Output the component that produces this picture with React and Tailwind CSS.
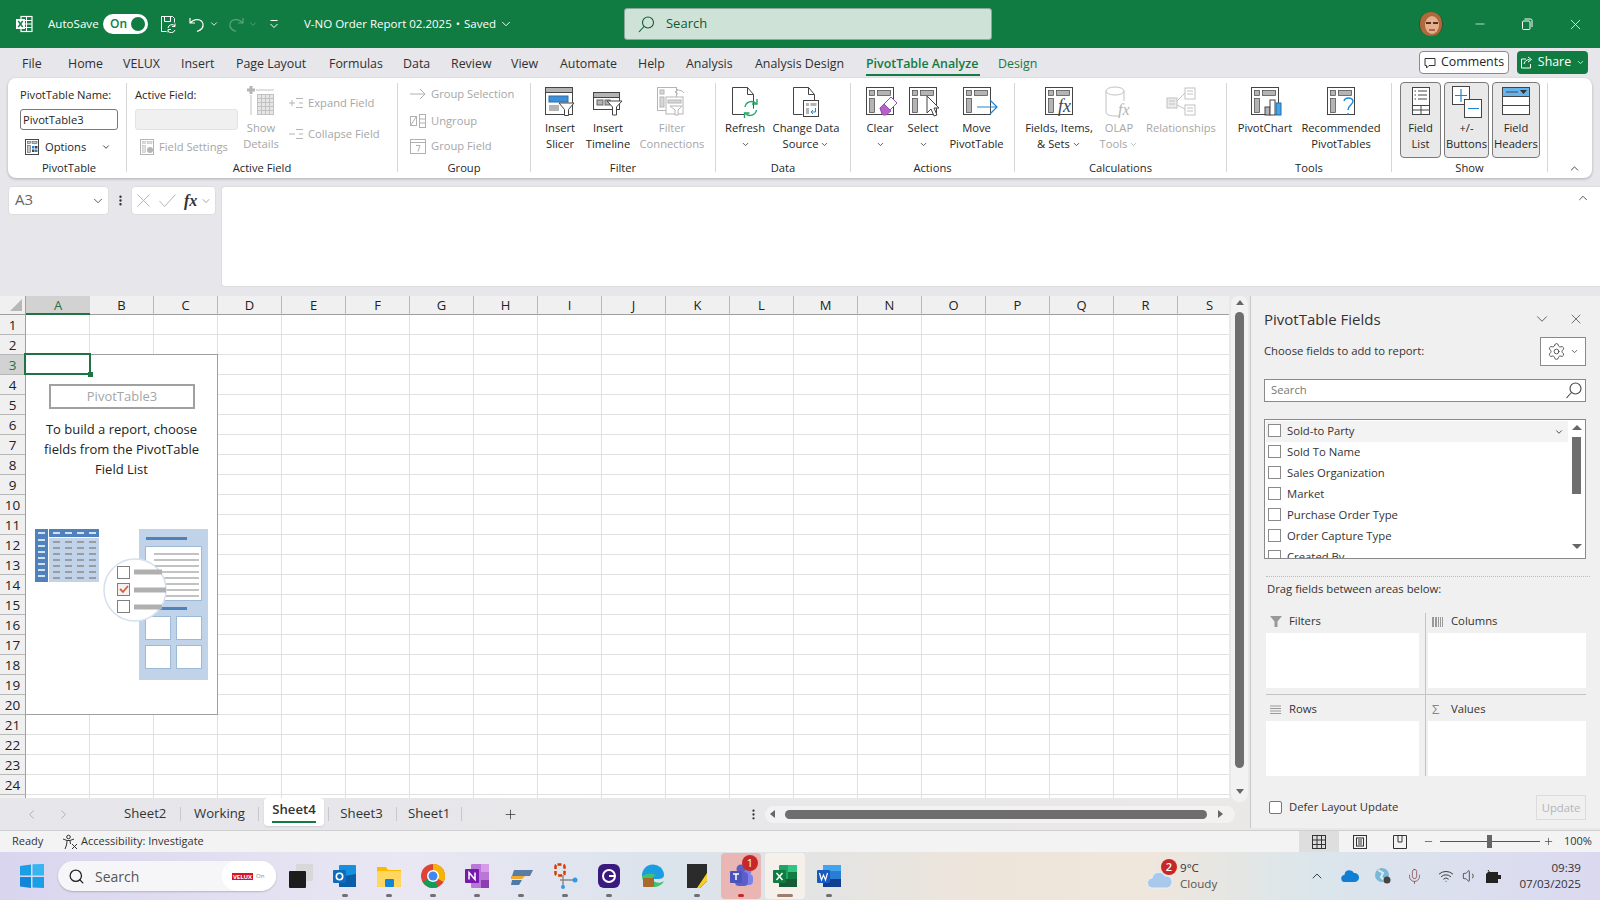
import { ChevronDown, ChevronUp, ChevronLeft, ChevronRight, X, Minus, Plus, Search, Settings, Wifi, Volume1, Mic, MoreVertical } from "lucide-react"

const columns = "ABCDEFGHIJKLMNOPQRS".split("")
const rows = Array.from({ length: 25 }, (_, i) => i + 1)

const tabs = [
  ["File", "w-[46px]"], ["Home", "w-[55px]"], ["VELUX", "w-[58px]"], ["Insert", "w-[55px]"], ["Page Layout", "w-[93px]"],
  ["Formulas", "w-[74px]"], ["Data", "w-[48px]"], ["Review", "w-[60px]"], ["View", "w-[49px]"], ["Automate", "w-[78px]"],
  ["Help", "w-[48px]"], ["Analysis", "w-[69px]"], ["Analysis Design", "w-[111px]"],
]

const fields = ["Sold-to Party", "Sold To Name", "Sales Organization", "Market", "Purchase Order Type", "Order Capture Type", "Created By"]

const XlLogo = ({ size = 18 }) => (
  <svg width={size} height={size} viewBox="0 0 18 18">
    <rect x="6" y="1.5" width="11" height="15" fill="none" stroke="currentColor" strokeWidth="1.2" />
    <path d="M6 5.5h11M6 9h11M6 12.5h11M11.5 1.5v15" stroke="currentColor" strokeWidth="1" />
    <rect x="1" y="4" width="9" height="10" fill="currentColor" />
    <path d="M3.3 6l4.4 6M7.7 6l-4.4 6" stroke="#107c41" strokeWidth="1.4" />
  </svg>
)

// the sheet-with-panes drawing that most PivotTable ribbon buttons share
const PaneBase = ({ children, faded }) => {
  const line = faded ? "#b5b5b5" : "#444444"
  const fill = faded ? "#dcdcdc" : "#b4b4b4"
  return (
    <svg width="28" height="30" viewBox="0 0 28 30" className="overflow-visible">
      <rect x="0.5" y="1.5" width="27" height="27" fill="#fff" stroke={line} />
      <rect x="3.5" y="4.5" width="5" height="5" fill={fill} stroke={line} strokeWidth="0.7" />
      <rect x="11.5" y="4.5" width="13" height="5" fill={fill} stroke={line} strokeWidth="0.7" />
      <rect x="3.5" y="12.5" width="5" height="14" fill={fill} stroke={line} strokeWidth="0.7" />
      {children}
    </svg>
  )
}

const SlicerIcon = () => (
  <svg width="32" height="30" viewBox="0 0 32 30">
    <rect x="1.5" y="1.5" width="27" height="27" fill="#fff" stroke="#444" />
    <rect x="1.5" y="1.5" width="27" height="5" fill="#b4b4b4" stroke="#444" />
    <rect x="5" y="10" width="19" height="6" fill="#3f8fd6" stroke="#2b6fae" />
    <rect x="5" y="19" width="10" height="6" fill="#b4b4b4" />
    <path d="M15 17h15l-5.5 6.5v6h-4v-6z" fill="#fff" stroke="#444" />
  </svg>
)

const TimelineIcon = () => (
  <svg width="32" height="30" viewBox="0 0 32 30">
    <rect x="1.5" y="6.5" width="26" height="17" fill="#fff" stroke="#444" />
    <rect x="1.5" y="6.5" width="26" height="5" fill="#b4b4b4" stroke="#444" />
    <rect x="5" y="14" width="6" height="5" fill="#b4b4b4" stroke="#666" />
    <rect x="13" y="14" width="5" height="5" fill="#b4b4b4" stroke="#666" />
    <path d="M15 15h15l-5.5 6v8h-4v-8z" fill="#fff" stroke="#444" />
  </svg>
)

const ConnectionsIcon = () => (
  <svg width="32" height="30" viewBox="0 0 32 30" stroke="#b5b5b5" fill="none">
    <rect x="1.5" y="1.5" width="19" height="23" fill="#fff" />
    <rect x="4" y="4" width="4" height="4" fill="#d8d8d8" />
    <rect x="4" y="11" width="4" height="10" fill="#d8d8d8" />
    <rect x="10" y="11" width="17" height="17" fill="#fff" />
    <rect x="12" y="14" width="13" height="3" fill="#d8d8d8" />
    <path d="M14 20h12l-4 4v5h-3v-5z" fill="#fff" />
    <path d="M19 6c3-3 7-2 9 1M19 6l3-3M19 6l3 2" />
  </svg>
)

const RefreshIcon = () => (
  <svg width="34" height="32" viewBox="0 0 34 32" fill="none">
    <path d="M4.5 1.5h15l6 7v14M4.5 1.5v27h12M19.5 1.5v7h6" stroke="#444" fill="#fff" />
    <path d="M17 21a6.5 6.5 0 0 1 11-3.5M28.5 24a6.5 6.5 0 0 1-11 3.5" stroke="#21a366" strokeWidth="1.4" />
    <path d="M29 13v5h-5M16.5 32v-5h5" stroke="#21a366" strokeWidth="1.4" />
  </svg>
)

const ChangeSourceIcon = () => (
  <svg width="34" height="32" viewBox="0 0 34 32" fill="none">
    <path d="M4.5 1.5h15l6 7v8M4.5 1.5v27h9M19.5 1.5v7h6" stroke="#444" fill="#fff" />
    <rect x="14.5" y="14.5" width="15" height="16" fill="#fff" stroke="#444" />
    <rect x="17" y="17" width="3" height="3" fill="#b4b4b4" />
    <rect x="21.5" y="17" width="6" height="3" fill="#b4b4b4" />
    <rect x="17" y="22" width="3" height="6" fill="#b4b4b4" />
    <path d="M26.5 22v4h-4M24 24l-2 2 2 2" stroke="#1c86d6" />
  </svg>
)

const ShowDetailsIcon = () => (
  <svg width="30" height="32" viewBox="0 0 30 32" fill="none" stroke="#c2c2c2">
    <path d="M5 0v8M1 4h8" stroke="#b5b5b5" strokeWidth="3" />
    <path d="M10 4h18M5 9v20" />
    <rect x="11.5" y="8.5" width="16" height="20" fill="#e6e6e6" />
    <path d="M11.5 12.5h16M11.5 16.5h16M11.5 20.5h16M11.5 24.5h16M15.5 8.5v20M19.5 8.5v20M23.5 8.5v20" />
  </svg>
)

const SmallPivot = ({ faded }) => {
  const line = faded ? "#b5b5b5" : "#444"
  const fill = faded ? "#e0e0e0" : "#c4c4c4"
  return (
    <svg width="16" height="16" viewBox="0 0 16 16">
      <rect x="1.5" y="0.5" width="13" height="15" fill="#fff" stroke={line} />
      <rect x="3.5" y="2.5" width="3" height="2" fill={fill} stroke={line} strokeWidth="0.5" />
      <rect x="8" y="2.5" width="5" height="2" fill={fill} stroke={line} strokeWidth="0.5" />
      <rect x="3.5" y="6.5" width="3" height="7" fill={fill} stroke={line} strokeWidth="0.5" />
      {faded ? <circle cx="11" cy="11" r="3" fill="#b5b5b5" /> : (
        <>
          <rect x="8" y="7" width="2.5" height="2.5" fill="#1c86d6" />
          <rect x="11" y="7" width="2.5" height="2.5" fill="#444" />
          <rect x="8" y="10.5" width="2.5" height="2.5" fill="#444" />
          <rect x="11" y="10.5" width="2.5" height="2.5" fill="#1c86d6" />
        </>
      )}
    </svg>
  )
}

const ExpandIcon = ({ plus }) => (
  <svg width="16" height="12" viewBox="0 0 16 12" stroke="#b5b5b5" fill="none">
    <path d={plus ? "M1 6h6M4 3v6" : "M1 6h6"} />
    <path d="M8 1.5h7M11 6h4M8 10.5h7" />
  </svg>
)

const BigButton = ({ className, icon, lines, faded, chevron }) => (
  <div className={`flex flex-col items-center shrink-0 pt-[3px] ${className}`}>
    <div className="h-[34px] flex items-start justify-center">{icon}</div>
    {lines.map((line, i) => (
      <div key={i} className={`h-4 leading-4 whitespace-nowrap flex items-center gap-[2px] ${faded ? "text-[#a6a6a6]" : "text-[#262626]"}`}>
        {line}
        {chevron && i === lines.length - 1 ? <ChevronDown size={9} strokeWidth={2} /> : null}
      </div>
    ))}
  </div>
)

const Group = ({ className, label, labelClass = "", children }) => (
  <>
    <div className={`shrink-0 ${className}`}>
      <div className="h-[77px] flex">{children}</div>
      <div className={`h-4 leading-4 text-center text-[#262626] ${labelClass}`}>{label}</div>
    </div>
    <div className="w-px h-[89px] bg-[#d6d6d6] shrink-0" />
  </>
)

const ToggleBox = ({ className, icon, lines }) => (
  <div className={`h-[76px] -mt-px rounded-[4px] border border-[#7a7a7a] bg-[#e9e9e9] flex flex-col items-center pt-[3px] shrink-0 ${className}`}>
    <div className="h-[34px]">{icon}</div>
    {lines.map((line) => (
      <div key={line} className="h-4 leading-4 whitespace-nowrap text-[#262626]">{line}</div>
    ))}
  </div>
)

const Ribbon = () => (
  <div className="mx-2 h-[100px] rounded-lg bg-white shadow-[0_1px_3px_rgba(0,0,0,0.25)] flex items-start pt-[5px] text-[11.2px] relative">
    <Group className="w-[118px]" label="PivotTable" labelClass="pl-1">
      <div className="pl-3 pt-[4px]">
        <div className="h-4 leading-4 text-[#262626]">PivotTable Name:</div>
        <div className="mt-[6px] w-[98px] h-[21px] rounded-[3px] border border-[#7a7a7a] pl-[2px] leading-[19px] text-[#262626]">PivotTable3</div>
        <div className="mt-[9px] pl-1 flex items-center gap-[5px] text-[#262626]">
          <SmallPivot />
          <span>Options</span>
          <ChevronDown size={10} strokeWidth={2} className="ml-[10px]" />
        </div>
      </div>
    </Group>
    <Group className="w-[270px]" label="Active Field">
      <div className="pl-2 pt-[4px] w-[114px]">
        <div className="h-4 leading-4 text-[#262626]">Active Field:</div>
        <div className="mt-[6px] w-[103px] h-[21px] rounded-[3px] border border-[#e3e3e3] bg-[#f0f0f0]" />
        <div className="mt-[9px] pl-1 flex items-center gap-1 text-[#a6a6a6] whitespace-nowrap">
          <SmallPivot faded />
          <span>Field Settings</span>
        </div>
      </div>
      <BigButton className="w-[40px]" icon={<ShowDetailsIcon />} lines={["Show", "Details"]} faded />
      <div className="pl-[7px] text-[#a6a6a6] whitespace-nowrap">
        <div className="mt-[12px] h-4 flex items-center gap-1"><ExpandIcon plus />Expand Field</div>
        <div className="mt-[15px] h-4 flex items-center gap-1"><ExpandIcon />Collapse Field</div>
      </div>
    </Group>
    <Group className="w-[132px]" label="Group">
      <div className="pl-3 text-[#a6a6a6] whitespace-nowrap">
        <div className="mt-[3px] h-4 flex items-center gap-[5px]">
          <svg width="16" height="12" viewBox="0 0 16 12" stroke="#b0b0b0" fill="none"><path d="M0 6h15M10 1l5 5-5 5" /></svg>
          Group Selection
        </div>
        <div className="mt-[11px] h-4 flex items-center gap-[5px]">
          <svg width="16" height="16" viewBox="0 0 16 16" stroke="#b0b0b0" fill="none"><rect x="0.5" y="3.5" width="6" height="9" /><rect x="9.5" y="1.5" width="6" height="13" /><path d="M9.5 6h6M9.5 10h6M1 12l5-8" /></svg>
          Ungroup
        </div>
        <div className="mt-[9px] h-4 flex items-center gap-[5px]">
          <svg width="16" height="16" viewBox="0 0 16 16" stroke="#b0b0b0" fill="none"><rect x="0.5" y="1.5" width="15" height="14" /><path d="M0.5 4.5h15M6 7.5h4l-2 6" /></svg>
          Group Field
        </div>
      </div>
    </Group>
    <Group className="w-[184px]" label="Filter">
      <BigButton className="w-12 ml-[5px]" icon={<SlicerIcon />} lines={["Insert", "Slicer"]} />
      <BigButton className="w-12" icon={<TimelineIcon />} lines={["Insert", "Timeline"]} />
      <BigButton className="w-[72px] ml-1" icon={<ConnectionsIcon />} lines={["Filter", "Connections"]} faded />
    </Group>
    <Group className="w-[134px]" label="Data">
      <BigButton className="w-10 ml-[9px]" icon={<RefreshIcon />} lines={["Refresh", <ChevronDown key="c" size={9} strokeWidth={2} />]} />
      <BigButton className="w-[76px] ml-[3px]" icon={<ChangeSourceIcon />} lines={["Change Data", "Source"]} chevron />
    </Group>
    <Group className="w-[163px]" label="Actions">
      <BigButton className="w-10 ml-[9px]" lines={["Clear", <ChevronDown key="c" size={9} strokeWidth={2} />]} icon={
        <PaneBase>
          <path d="M14 22l11-11 6 6-11 11h-4z" fill="#fff" stroke="#9a4fb0" />
          <path d="M14 22l4-4 7 7-5 4h-3z" fill="#b660c9" stroke="#9a4fb0" />
        </PaneBase>
      } />
      <BigButton className="w-10 ml-[3px]" lines={["Select", <ChevronDown key="c" size={9} strokeWidth={2} />]} icon={
        <PaneBase><path d="M18 10v17l4-4 3 7 3-1-3-7h5z" fill="#fff" stroke="#444" /></PaneBase>
      } />
      <BigButton className="w-[63px] ml-[2px]" lines={["Move", "PivotTable"]} icon={
        <PaneBase><path d="M14 21h20M27 14l7 7-7 7" fill="none" stroke="#1c86d6" strokeWidth="1.2" /></PaneBase>
      } />
    </Group>
    <Group className="w-[211px]" label="Calculations">
      <BigButton className="w-[76px] ml-[6px]" lines={["Fields, Items,", "& Sets"]} chevron icon={
        <PaneBase><text x="13" y="26" fontFamily="Liberation Serif, serif" fontStyle="italic" fontSize="18" fill="#444">fx</text></PaneBase>
      } />
      <BigButton className="w-11" lines={["OLAP", "Tools"]} faded chevron icon={
        <svg width="30" height="32" viewBox="0 0 30 32" fill="none" stroke="#c2c2c2">
          <ellipse cx="11" cy="5" rx="9" ry="4" />
          <path d="M2 5v21c0 3 5 4 9 4h4M20 5v10" />
          <text x="14" y="29" fontFamily="Liberation Serif, serif" fontStyle="italic" fontSize="16" fill="#b5b5b5" stroke="none">fx</text>
        </svg>
      } />
      <BigButton className="w-[76px] ml-[2px]" lines={["Relationships"]} faded icon={
        <svg width="30" height="30" viewBox="0 0 30 30" fill="none" stroke="#c2c2c2">
          <rect x="1" y="12" width="10" height="10" fill="#ebebeb" />
          <rect x="19" y="2" width="10" height="11" fill="#fff" />
          <rect x="19" y="19" width="10" height="10" fill="#fff" />
          <path d="M11 15l8-8M11 19l8 4M21 5h6M21 8h6M21 22h6M21 25h6M3 15h6M3 18h6" />
        </svg>
      } />
    </Group>
    <Group className="w-[164px]" label="Tools">
      <BigButton className="w-16 ml-[6px]" lines={["PivotChart"]} icon={
        <PaneBase>
          <rect x="14" y="21" width="5" height="8" fill="#b4b4b4" stroke="#444" />
          <rect x="19" y="14" width="5" height="15" fill="#fff" stroke="#444" />
          <rect x="25" y="17" width="5" height="12" fill="#4aa3df" stroke="#1c6fb0" />
        </PaneBase>
      } />
      <BigButton className="w-[84px] ml-[2px]" lines={["Recommended", "PivotTables"]} icon={
        <PaneBase><path d="M17 15c1-4 8-4 9 0 0 4-5 4-5 9M21 27v2" fill="none" stroke="#1c86d6" strokeWidth="1.4" /></PaneBase>
      } />
    </Group>
    <Group className="w-[155px]" label="Show">
      <ToggleBox className="w-[41px] ml-2" lines={["Field", "List"]} icon={
        <svg width="20" height="30" viewBox="0 0 20 30" fill="#fff" stroke="#444">
          <rect x="1.5" y="1.5" width="17" height="27" />
          <path d="M1.5 19.5h17M1.5 24h17M10 19.5v9M7 5h9M7 9h9M7 13h9M3.5 5h1.5M3.5 9h1.5M3.5 13h1.5" />
        </svg>
      } />
      <ToggleBox className="w-[45px] ml-[3px]" lines={["+/-", "Buttons"]} icon={
        <svg width="32" height="32" viewBox="0 0 32 32" fill="none">
          <rect x="1.5" y="0.5" width="17" height="18" fill="#fff" stroke="#444" />
          <rect x="13.5" y="13.5" width="17" height="18" fill="#fff" stroke="#444" />
          <path d="M4 9.5h12M10 3v13M17 22.5h11" stroke="#1c86d6" strokeWidth="1.2" />
        </svg>
      } />
      <ToggleBox className="w-12 ml-[3px]" lines={["Field", "Headers"]} icon={
        <svg width="30" height="30" viewBox="0 0 30 30" fill="#fff" stroke="#444">
          <rect x="1.5" y="1.5" width="27" height="27" />
          <rect x="1.5" y="1.5" width="27" height="9" fill="#67b4ec" stroke="#444" />
          <path d="M1.5 19.5h27M5 6h12" />
          <path d="M19 4h7l-3.5 4z" fill="#333" stroke="none" />
        </svg>
      } />
    </Group>
    <ChevronUp size={13} strokeWidth={1.6} className="absolute right-[11px] bottom-[3px] text-[#333]" />
  </div>
)

const TitleBar = () => (
  <div className="h-12 bg-[#107c41] flex items-center text-white text-[11.6px] shrink-0">
    <div className="ml-[15px] w-[33px]"><XlLogo /></div>
    <span className="w-[55px]">AutoSave</span>
    <div className="w-[45px] h-5 rounded-full bg-white flex items-center justify-between pl-[7px] pr-[3px] text-[#107c41] font-semibold text-[12px]">
      On
      <div className="w-[14px] h-[14px] rounded-full bg-[#107c41]" />
    </div>
    <svg width="18" height="18" viewBox="0 0 18 18" fill="none" stroke="#fff" className="ml-[11px]">
      <path d="M2.5 1.5h11l2 2v4M2.5 1.5v15h5M5.5 1.5v5h6v-5" />
      <path d="M9 13a4 4 0 0 1 7-2M16 15a4 4 0 0 1-7 1M16 8.500v3h-3M9 17.500v-3h3" />
    </svg>
    <svg width="18" height="18" viewBox="0 0 18 18" fill="none" stroke="#fff" strokeWidth="1.2" className="ml-[11px]">
      <path d="M2 3v5h5M2.500 8C6 3 14 3.500 15 9c.6 3.500-2 6-6 7.500" />
    </svg>
    <ChevronDown size={10} strokeWidth={2} className="ml-[3px]" />
    <svg width="18" height="18" viewBox="0 0 18 18" fill="none" stroke="#5aa47f" strokeWidth="1.2" className="ml-[8px]">
      <path d="M16 3v5h-5M15.500 8C12 3 4 3.500 3 9c-.6 3.500 2 6 6 7.500" />
    </svg>
    <ChevronDown size={10} strokeWidth={2} className="ml-[3px] text-[#5aa47f]" />
    <svg width="10" height="10" viewBox="0 0 10 10" stroke="#fff" fill="none" className="ml-[11px]"><path d="M1.500 1.500h7M1.500 5l3.500 3.500L8.500 5" /></svg>
    <span className="ml-[25px] whitespace-nowrap text-[11.5px]">V-NO Order Report 02.2025 <span className="mx-[1px]">•</span> Saved</span>
    <ChevronDown size={14} strokeWidth={1.6} className="ml-[3px]" />
    <div className="ml-[111px] w-[368px] h-8 rounded-[3px] border border-[#8aa89a] bg-[#cfe2d8] flex items-center pl-[13px] text-[#0d5a30] text-[13px]">
      <svg width="17" height="17" viewBox="0 0 17 17" fill="none" stroke="#0f5a33" className="mr-[11px]" strokeWidth="1.1">
        <circle cx="10" cy="6.500" r="5.500" /><path d="M6 10.500l-5 5.500" />
      </svg>
      Search
    </div>
    <div className="flex-1" />
    <svg width="24" height="24" viewBox="0 0 24 24" className="mr-[30px]">
      <clipPath id="avatarClip"><circle cx="12" cy="12" r="12" /></clipPath>
      <g clipPath="url(#avatarClip)">
        <rect width="24" height="24" fill="#3a4a3c" />
        <ellipse cx="12" cy="12" rx="11" ry="13" fill="#b06a3a" />
        <ellipse cx="13" cy="13" rx="7" ry="9" fill="#e2b08f" />
        <path d="M7 11h5M14 11h5" stroke="#5a2d1d" strokeWidth="2" />
        <path d="M10 18h6" stroke="#a8443a" strokeWidth="1.5" />
      </g>
    </svg>
    <Minus size={14} strokeWidth={1.2} className="mr-[34px]" />
    <svg width="12" height="12" viewBox="0 0 12 12" fill="none" stroke="#fff" className="mr-[34px]"><rect x="1.500" y="3" width="7.500" height="8.500" rx="1" /><path d="M3.500 1h6a1.500 1.500 0 0 1 1.500 1.500V9" /></svg>
    <X size={17} strokeWidth={1.1} className="mr-[16px]" />
  </div>
)

const TabRow = () => (
  <div className="h-[30px] flex items-center text-[12.4px] text-[#303030] shrink-0 pl-[22px]">
    {tabs.map(([label, width]) => (
      <span key={label} className={`${width} whitespace-nowrap shrink-0 pt-[2px]`}>{label}</span>
    ))}
    <span className="w-[132px] shrink-0 relative font-semibold text-[#107c41] whitespace-nowrap leading-[30px] pt-[1px]">
      PivotTable Analyze
      <span className="absolute left-0 top-[26px] w-[114px] h-[2px] bg-[#107c41]" />
    </span>
    <span className="w-[60px] text-[#107c41] pt-[2px]">Design</span>
    <div className="ml-auto flex gap-2 mr-3 -mt-[1px]">
      <div className="w-[90px] h-[23px] rounded-[4px] border border-[#8a8a8a] bg-white flex items-center justify-center gap-[5px] text-[#262626]">
        <svg width="12" height="12" viewBox="0 0 12 12" fill="none" stroke="#333"><path d="M1 1.500h10v7H5l-2.500 2.500v-2.500H1z" /></svg>
        Comments
      </div>
      <div className="w-[71px] h-[23px] rounded-[4px] bg-[#107c41] text-white flex items-center justify-center gap-[5px]">
        <svg width="13" height="13" viewBox="0 0 13 13" fill="none" stroke="#fff"><path d="M6 3H1.500v9h9V8M4 8c.5-3 3-4.500 5.500-4.500M8 1l3.500 2.500L8 6" /></svg>
        Share
        <ChevronDown size={9} strokeWidth={2} />
      </div>
    </div>
  </div>
)

const FormulaBar = () => (
  <div className="mt-2 h-[101px] flex items-start text-[#444] shrink-0">
    <div className="ml-2 w-[101px] h-[29px] rounded-[4px] border border-[#dddddd] bg-white flex items-center justify-between pl-[6px] pr-[3px] text-[15px] text-[#666]">
      <span className="pb-[3px]">A3</span>
      <ChevronDown size={14} strokeWidth={1.4} className="text-[#333]" />
    </div>
    <MoreVertical size={13} strokeWidth={2.4} className="ml-[5px] mt-2 text-[#333]" />
    <div className="ml-1 w-[85px] h-[29px] rounded-[4px] border border-[#dddddd] bg-white flex items-center pl-[5px]">
      <svg width="13" height="13" viewBox="0 0 13 13" stroke="#b5b5b5" fill="none"><path d="M0.500 0.500l12 12M12.500 0.500l-12 12" /></svg>
      <svg width="17" height="13" viewBox="0 0 17 13" stroke="#b5b5b5" fill="none" className="ml-[9px]"><path d="M0.500 7l5 5.500L16.500 0.500" /></svg>
      <span className="ml-[8px] font-['Liberation_Serif',serif] italic font-bold text-[16px] text-[#333]">fx</span>
      <ChevronDown size={12} strokeWidth={1.2} className="ml-[3px] text-[#666]" />
    </div>
    <div className="ml-[5px] flex-1 h-[101px] rounded-l-[4px] border border-r-0 border-[#dddddd] bg-white flex justify-end pr-[10px] pt-[4px]">
      <ChevronUp size={14} strokeWidth={1.4} className="text-[#333]" />
    </div>
  </div>
)

const PivotPicture = () => (
  <svg width="176" height="152" viewBox="0 0 176 152" className="block">
    {/* left table */}
    <rect x="0" y="0" width="13" height="53" fill="#4f81bd" />
    <rect x="14" y="0" width="50" height="8" fill="#4f81bd" />
    <rect x="14" y="9" width="50" height="44" fill="#c0d3e8" />
    <path d="M3 4h7M18 4h7M30 4h7M42 4h7M54 4h7" stroke="#fff" strokeWidth="1.500" />
    <path d="M3 11h7M3 17h7M3 23h7M3 29h7M3 35h7M3 41h7M3 47h7" stroke="#fff" strokeWidth="1.500" />
    <path d="M18 13h7M30 13h7M42 13h7M54 13h7M18 19h7M30 19h7M42 19h7M54 19h7M18 25h7M30 25h7M42 25h7M54 25h7M18 31h7M30 31h7M42 31h7M54 31h7M18 37h7M30 37h7M42 37h7M54 37h7M18 43h7M30 43h7M42 43h7M54 43h7M18 49h7M30 49h7M42 49h7M54 49h7" stroke="#8c8c8c" strokeWidth="1.500" />
    {/* right panel */}
    <rect x="104" y="0" width="69" height="151" fill="#c0d3e8" />
    <rect x="111" y="8" width="41" height="3" fill="#4f81bd" />
    <rect x="110.500" y="17.500" width="56" height="54" fill="#fff" stroke="#9db9d8" />
    <path d="M119 25h45M119 31h45M119 37h45M119 43h45M119 49h45M119 55h45M119 61h45M119 67h45" stroke="#aeaeae" strokeWidth="1.600" />
    <rect x="111" y="78" width="41" height="3" fill="#4f81bd" />
    <rect x="110.500" y="87.500" width="25" height="23" fill="#fff" stroke="#9db9d8" />
    <rect x="141.500" y="87.500" width="25" height="23" fill="#fff" stroke="#9db9d8" />
    <rect x="110.500" y="116.500" width="25" height="23" fill="#fff" stroke="#9db9d8" />
    <rect x="141.500" y="116.500" width="25" height="23" fill="#fff" stroke="#9db9d8" />
    {/* lens */}
    <circle cx="100" cy="61" r="31" fill="#fff" stroke="#d4e0ee" strokeWidth="1.500" />
    <rect x="82.500" y="37.500" width="12" height="12" fill="#fff" stroke="#7f7f7f" />
    <rect x="82.500" y="54.500" width="12" height="12" fill="#f2f2f2" stroke="#7f7f7f" />
    <rect x="82.500" y="71.500" width="12" height="12" fill="#fff" stroke="#7f7f7f" />
    <path d="M85 60l3 3 5-6" fill="none" stroke="#d8613c" strokeWidth="1.800" />
    <path d="M99 43h28M99 61h32M99 78h28" stroke="#b0b0b0" strokeWidth="5" />
  </svg>
)

const Grid = () => (
  <div className="w-[1229px] h-[502px] overflow-hidden relative bg-white">
    <div className="flex h-[19px] w-[1242px] bg-[#f0f0f0] text-[13px] text-[#222]">
      <div className="w-[26px] shrink-0 border-r border-b border-[#9f9f9f] relative overflow-hidden">
        <div className="absolute right-[3px] bottom-[3px] w-0 h-0 border-l-[12px] border-l-transparent border-b-[12px] border-b-[#b8b8b8]" />
      </div>
      {columns.map((c) => (
        <div key={c} className={`w-16 shrink-0 text-center leading-[18px] ${c === "A" ? "bg-[#d2d2d2] text-[#217346] border-b-2 border-[#217346]" : "border-r border-b border-[#b8b8b8] border-b-[#9f9f9f]"}`}>{c}</div>
      ))}
    </div>
    {rows.map((r) => (
      <div key={r} className="flex h-5 w-[1242px]">
        <div className={`w-[26px] shrink-0 text-center text-[13.5px] leading-[20px] border-r border-b border-r-[#9f9f9f] border-b-[#b8b8b8] ${r === 3 ? "bg-[#d2d2d2] text-[#217346]" : "bg-[#f0f0f0] text-[#222]"}`}>{r < 25 ? r : ""}</div>
        {columns.map((c) => (
          <div key={c} className="w-16 shrink-0 border-r border-b border-[#e1e1e1]" />
        ))}
      </div>
    ))}
    {/* empty PivotTable placeholder sits on top of the cells */}
    <div className="absolute left-[25px] top-[58px] w-[193px] h-[361px] bg-white border border-[#9f9f9f]">
      <div className="ml-[23px] mt-[29px] w-[146px] h-[25px] border-2 border-[#a0a0a0] text-center text-[13px] leading-[21px] text-[#a6a6a6]">PivotTable3</div>
      <div className="mt-[10px] text-center text-[13px] leading-5 text-[#222]">
        To build a report, choose<br />fields from the PivotTable<br />Field List
      </div>
      <div className="ml-[9px] mt-[50px]"><PivotPicture /></div>
    </div>
    <div className="absolute left-[24px] top-[57px] w-[67px] h-[22px] border-2 border-[#217346]">
      <div className="absolute -right-[4px] -bottom-[4px] w-[5px] h-[5px] bg-[#217346]" />
    </div>
  </div>
)

const VScroll = () => (
  <div className="w-[21px] h-[502px] pl-[2px]">
    <div className="w-[17px] h-[506px] rounded-[8px] bg-[#f2f2f2] flex flex-col items-center pt-[4px]">
      <div className="w-0 h-0 border-l-[4px] border-r-[4px] border-b-[5px] border-l-transparent border-r-transparent border-b-[#666]" />
      <div className="mt-[7px] w-[9px] h-[456px] rounded-full bg-[#6e6e6e]" />
      <div className="mt-[21px] w-0 h-0 border-l-[4px] border-r-[4px] border-t-[5px] border-l-transparent border-r-transparent border-t-[#666]" />
    </div>
  </div>
)

const SheetTabs = () => (
  <div className="h-8 flex items-center text-[13.2px] text-[#333] relative">
    <ChevronLeft size={15} strokeWidth={1.1} className="ml-6 text-[#999]" />
    <ChevronRight size={15} strokeWidth={1.1} className="ml-[17px] text-[#999]" />
    <span className="ml-[53px] w-[42px] text-center">Sheet2</span>
    <div className="ml-[14px] w-px h-[14px] bg-[#c8c8c8]" />
    <span className="ml-[12px] w-[53px] text-center">Working</span>
    <div className="ml-[12px] w-px h-[14px] bg-[#c8c8c8]" />
    <div className="ml-[5px] w-[60px] h-[28px] self-start rounded-[4px] bg-white text-center font-semibold leading-[22px] relative shadow-[0_1px_2px_rgba(0,0,0,0.1)]">
      Sheet4
      <div className="absolute left-2 right-2 top-[23px] h-[2px] bg-[#107c41]" />
    </div>
    <div className="ml-[4px] w-px h-[14px] bg-[#c8c8c8]" />
    <span className="ml-[11px] w-[43px] text-center">Sheet3</span>
    <div className="ml-[13px] w-px h-[14px] bg-[#c8c8c8]" />
    <span className="ml-[11px] w-[41px] text-center">Sheet1</span>
    <div className="ml-[12px] w-px h-[14px] bg-[#c8c8c8]" />
    <Plus size={15} strokeWidth={1.2} className="ml-[41px] text-[#333]" />
    <MoreVertical size={13} strokeWidth={2.2} className="ml-[229px] text-[#333]" />
    <div className="ml-[5px] w-[470px] h-[17px] rounded-full bg-[#f2f2f2] flex items-center pl-[5px]">
      <div className="w-0 h-0 border-t-[4px] border-b-[4px] border-r-[5px] border-t-transparent border-b-transparent border-r-[#666]" />
      <div className="ml-[10px] w-[422px] h-[9px] rounded-full bg-[#6e6e6e]" />
      <div className="ml-[11px] w-0 h-0 border-t-[4px] border-b-[4px] border-l-[5px] border-t-transparent border-b-transparent border-l-[#666]" />
    </div>
  </div>
)

const AreaLabel = ({ icon, children, className }) => (
  <div className={`flex items-center text-[#333] ${className}`}>
    <div className="w-[23px] pl-1 flex items-center">{icon}</div>
    {children}
  </div>
)

const FieldsPanel = () => (
  <div className="w-[350px] h-[532px] bg-[#f0f0f0] border-l border-[#c9c9c9] pl-[13px] pr-[14px] text-[11.3px] text-[#333]">
    <div className="mt-3 h-[22px] flex items-center justify-between">
      <span className="text-[15px] text-[#333]">PivotTable Fields</span>
      <div className="flex items-center gap-[17px] mr-[2px]">
        <ChevronDown size={18} strokeWidth={1} />
        <X size={16} strokeWidth={1} />
      </div>
    </div>
    <div className="mt-[7px] h-[29px] flex items-center justify-between">
      <span>Choose fields to add to report:</span>
      <div className="w-[46px] h-[29px] border border-[#8a8a8a] bg-white flex items-center justify-center gap-[4px]">
        <Settings size={19} strokeWidth={1} />
        <ChevronDown size={9} strokeWidth={2} />
      </div>
    </div>
    <div className="mt-[13px] h-[23px] border border-[#8a8a8a] bg-white flex items-center justify-between pl-[6px] pr-[3px] text-[#777]">
      Search
      <svg width="17" height="17" viewBox="0 0 17 17" fill="none" stroke="#444" strokeWidth="1.100"><circle cx="10.500" cy="6.500" r="5.500" /><path d="M6.500 10.500l-5 5.500" /></svg>
    </div>
    <div className="mt-[17px] h-[140px] border border-[#8a8a8a] bg-white flex overflow-hidden">
      <div className="flex-1 pl-px pt-px">
        {fields.map((field, i) => (
          <div key={field} className={`h-[21px] flex items-center pl-[2px] pr-1 ${i === 0 ? "bg-[#f3f3f3]" : ""}`}>
            <div className="w-[13px] h-[13px] border border-[#8a8a8a] bg-white mr-[6px] -mt-[2px]" />
            <span>{field}</span>
            {i === 0 ? <ChevronDown size={10} strokeWidth={2} className="ml-auto" /> : null}
          </div>
        ))}
      </div>
      <div className="w-[17px] flex flex-col items-center pt-[5px]">
        <div className="w-0 h-0 border-l-[5px] border-r-[5px] border-b-[5px] border-l-transparent border-r-transparent border-b-[#666]" />
        <div className="mt-[7px] w-[9px] h-[57px] bg-[#6e6e6e]" />
        <div className="mt-[50px] w-0 h-0 border-l-[5px] border-r-[5px] border-t-[5px] border-l-transparent border-r-transparent border-t-[#666]" />
      </div>
    </div>
    <div className="mt-[17px] -mr-1 ml-[2px] h-px border-t border-dotted border-[#bdbdbd]" />
    <div className="mt-1 ml-[3px] h-4 leading-4">Drag fields between areas below:</div>
    <div className="mt-4 ml-[2px] h-[82px] flex border-b border-[#c4c4c4]">
      <div className="w-40 h-[81px] border-r border-[#c4c4c4]">
        <AreaLabel className="h-5 pb-[3px]" icon={<svg width="12" height="11" viewBox="0 0 12 11" fill="#999"><path d="M0 0h12L7.500 5.500V11h-3V5.500z" /></svg>}>Filters</AreaLabel>
        <div className="w-[153px] h-[55px] bg-white" />
      </div>
      <div className="pl-[2px] flex-1">
        <AreaLabel className="h-5 pb-[3px]" icon={<svg width="11" height="10" viewBox="0 0 11 10" fill="#999"><path d="M0 0h2v10H0zM3 0h2v10H3zM6 0h1v10H6zM8 0h1v10H8zM10 0h1v10h-1z" /></svg>}>Columns</AreaLabel>
        <div className="h-[55px] bg-white" />
      </div>
    </div>
    <div className="ml-[2px] h-[81px] flex">
      <div className="w-40 border-r border-[#c4c4c4]">
        <AreaLabel className="h-[26px] pt-[2px]" icon={<svg width="11" height="9" viewBox="0 0 11 9" stroke="#999" fill="none"><path d="M0 1h11M0 3.500h11M0 6h11M0 8.500h11" /></svg>}>Rows</AreaLabel>
        <div className="w-[153px] h-[55px] bg-white" />
      </div>
      <div className="pl-[2px] flex-1">
        <AreaLabel className="h-[26px] pt-[2px]" icon={<span className="text-[#888] text-[13px] leading-none">Σ</span>}>Values</AreaLabel>
        <div className="h-[55px] bg-white" />
      </div>
    </div>
    <div className="mt-[19px] ml-[5px] flex items-center">
      <div className="w-[13px] h-[13px] rounded-[2px] border border-[#777] bg-white mr-[7px]" />
      Defer Layout Update
      <div className="ml-auto w-[50px] h-[25px] border border-[#dcdcdc] text-center leading-[23px] text-[#b5b5b5]">Update</div>
    </div>
  </div>
)

const StatusBar = () => (
  <div className="h-[22px] bg-[#f3f3f3] border-t border-[#cfcfcf] flex items-center text-[11px] text-[#333] shrink-0">
    <span className="ml-3 w-[50px]">Ready</span>
    <svg width="16" height="16" viewBox="0 0 16 16" fill="none" stroke="#333" className="mr-[3px]">
      <circle cx="6.500" cy="3" r="1.800" /><path d="M1 5l4 1.500h3L12 5M5 7l-.5 4L3 15M8 7l.5 3M10 10l5 5M15 10l-5 5" />
    </svg>
    <span>Accessibility: Investigate</span>
    <div className="ml-auto w-10 h-[21px] bg-[#dedede] flex items-center justify-center">
      <svg width="14" height="14" viewBox="0 0 14 14" fill="none" stroke="#333"><rect x="0.500" y="0.500" width="13" height="13" /><path d="M0.500 5h13M0.500 9.500h13M5 0.500v13M9.500 0.500v13" /></svg>
    </div>
    <div className="w-[41px] flex justify-center">
      <svg width="14" height="14" viewBox="0 0 14 14" fill="none" stroke="#333"><rect x="0.500" y="0.500" width="13" height="13" /><rect x="3.500" y="3" width="7" height="8" /><path d="M5 5h4M5 7h4M5 9h4" /></svg>
    </div>
    <div className="w-10 flex justify-center">
      <svg width="14" height="14" viewBox="0 0 14 14" fill="none" stroke="#333"><path d="M0.500 0.500h13v13H0.500zM5 0.500v6.500h4V0.500" /></svg>
    </div>
    <Minus size={11} strokeWidth={1.4} className="ml-[3px]" />
    <div className="ml-[6px] w-[100px] h-px bg-[#555] relative">
      <div className="absolute left-[47px] -top-[6px] w-[5px] h-[13px] bg-[#666]" />
    </div>
    <Plus size={11} strokeWidth={1.4} className="ml-[3px]" />
    <span className="ml-[10px] mr-2 w-[28px] text-[11px] text-[#333]">100%</span>
  </div>
)

const TaskSlot = ({ children, dot, className = "" }) => (
  <div className={`w-10 h-[46px] mx-[2px] rounded-[4px] flex flex-col items-center justify-center relative shrink-0 ${className}`}>
    {children}
    {dot ? <div className={`absolute bottom-[2px] w-[6px] h-[3px] rounded-full ${dot}`} /> : null}
  </div>
)

const Taskbar = () => (
  <div className="h-12 flex items-center shrink-0 bg-[linear-gradient(90deg,#d9d5ef_0%,#e9e7f3_25%,#dbe3ec_42%,#eee5da_62%,#efe6dc_72%,#dbe6ec_82%,#dbd9f0_100%)]">
    <svg width="24" height="24" viewBox="0 0 24 24" className="ml-5 shrink-0">
      <path d="M0 2l11-1.500V11.500H0z" fill="#1a9fe6" /><path d="M12.500 0.300L24 0v11.500H12.500z" fill="#36b5f0" />
      <path d="M0 13h11v11L0 22.500z" fill="#0f86d8" /><path d="M12.500 13H24v11l-11.500-.5z" fill="#1a9fe6" />
    </svg>
    <div className="ml-[14px] w-[218px] h-[30px] rounded-full bg-[#f6f6f8] shadow-[0_1px_2px_rgba(0,0,0,0.2)] flex items-center pl-[10px] text-[14px] text-[#555] shrink-0">
      <Search size={17} strokeWidth={1.800} className="text-[#222] mr-[10px]" />
      Search
      <div className="ml-auto mr-0 w-[54px] h-[30px] rounded-full bg-white flex items-center pl-[10px] gap-[3px]">
        <span className="w-[21px] h-[9px] bg-[#d3142a] text-white text-[6px] leading-[9px] font-bold text-center border-t border-b border-white">VELUX</span>
        <span className="text-[6px] text-[#888]">On</span>
      </div>
    </div>
    <div className="ml-[3px] flex items-center">
      <TaskSlot>
        <svg width="26" height="26" viewBox="0 0 26 26"><rect x="8" y="1" width="17" height="17" rx="1" fill="#d8d8d8" /><rect x="1" y="8" width="17" height="17" rx="1" fill="#1c1c1c" /></svg>
      </TaskSlot>
      <TaskSlot dot="bg-[#707070]">
        <svg width="26" height="26" viewBox="0 0 26 26"><rect x="7" y="2" width="17" height="22" rx="1" fill="#1490df" /><path d="M7 14l17-3v13H7z" fill="#0a5ea8" /><rect x="1" y="7" width="13" height="13" rx="1" fill="#0f6cbd" /><circle cx="7.500" cy="13.500" r="3.200" fill="none" stroke="#fff" strokeWidth="1.600" /></svg>
      </TaskSlot>
      <TaskSlot dot="bg-[#707070]">
        <svg width="26" height="26" viewBox="0 0 26 26"><path d="M1 4h9l2 3h13v17H1z" fill="#ffb900" /><rect x="1" y="8" width="24" height="16" rx="1" fill="#ffd75e" /><rect x="9" y="16" width="9" height="8" rx="1" fill="#0f86d8" /></svg>
      </TaskSlot>
      <TaskSlot dot="bg-[#707070]">
        <svg width="26" height="26" viewBox="0 0 26 26"><circle cx="13" cy="13" r="12" fill="#db4437" /><path d="M13 13L2.600 19A12 12 0 0 0 18 24z" fill="#0f9d58" /><path d="M13 1a12 12 0 0 1 10.400 18L13 13V1z" fill="#f4b400" /><path d="M13 7a6 6 0 0 0 0 12 6 6 0 0 0 0-12z" fill="#fff" /><circle cx="13" cy="13" r="4.500" fill="#4285f4" /></svg>
      </TaskSlot>
      <TaskSlot dot="bg-[#707070]">
        <svg width="26" height="26" viewBox="0 0 26 26"><rect x="7" y="1" width="18" height="24" rx="1" fill="#ba77d8" /><rect x="17" y="1" width="8" height="8" fill="#d59ce7" /><rect x="17" y="17" width="8" height="8" fill="#8c3fae" /><rect x="1" y="6" width="14" height="14" rx="1" fill="#7719aa" /><path d="M5 16.500v-7l6 7v-7" stroke="#fff" strokeWidth="1.500" fill="none" /></svg>
      </TaskSlot>
      <TaskSlot dot="bg-[#707070]">
        <svg width="26" height="26" viewBox="0 0 26 26"><path d="M6 7h19l-3 6H4z" fill="#5b7da3" /><path d="M3 13h14l-3 3H3z" fill="#f0a92c" /><path d="M4 17h10l-3 5H3z" fill="#4d7aa8" /></svg>
      </TaskSlot>
      <TaskSlot dot="bg-[#707070]">
        <svg width="26" height="26" viewBox="0 0 26 26" fill="none"><rect x="3.500" y="1.500" width="9" height="11" rx="2" stroke="#d83b01" strokeWidth="2.500" strokeDasharray="4 2" /><path d="M11 12v12M8 17h14" stroke="#888" strokeWidth="1.400" /><circle cx="23" cy="17" r="2.500" fill="#2f9be6" /><circle cx="11" cy="24" r="2" fill="#2f9be6" /></svg>
      </TaskSlot>
      <TaskSlot dot="bg-[#707070]">
        <svg width="26" height="26" viewBox="0 0 26 26"><rect x="2" y="1" width="22" height="24" rx="6" fill="#3b1a80" /><circle cx="13" cy="13" r="6" fill="none" stroke="#fff" strokeWidth="2" /><path d="M13 13h6" stroke="#fff" strokeWidth="2" /></svg>
      </TaskSlot>
      <TaskSlot>
        <svg width="28" height="28" viewBox="0 0 28 28"><path d="M3 14a11 11 0 0 1 22-1c0 3-3 4-6 4H9z" fill="#1b9de2" /><path d="M3 14c0 6 5 11 11 11 5 0 9-2 11-6-4 3-9 2-11-1-1-2 0-4 3-5-7-3-12 0-14 1z" fill="#3ec46d" /><rect x="4" y="16" width="11" height="9" rx="1" fill="#a9692c" /></svg>
      </TaskSlot>
      <TaskSlot dot="bg-[#707070]">
        <svg width="26" height="26" viewBox="0 0 26 26"><path d="M3 1h20v17l-7 7H3z" fill="#2b2b2b" /><path d="M23 10v8l-7 7h-3z" fill="#f6cf22" /></svg>
      </TaskSlot>
      <TaskSlot dot="bg-[#c62828]" className="bg-[#e9b6b3]">
        <svg width="26" height="26" viewBox="0 0 26 26"><circle cx="20" cy="8" r="3.500" fill="#7b83eb" /><rect x="14" y="11" width="11" height="11" rx="4" fill="#7b83eb" /><circle cx="13" cy="6" r="4.500" fill="#5b5fc7" /><rect x="7" y="9" width="13" height="14" rx="4" fill="#5b5fc7" /><rect x="2" y="8" width="12" height="12" rx="1" fill="#4b53bc" /><path d="M5 11h6M8 11v6" stroke="#fff" strokeWidth="1.500" /></svg>
        <div className="absolute top-[2px] right-[3px] w-4 h-4 rounded-full bg-[#c62828] text-white text-[11px] leading-4 text-center">1</div>
      </TaskSlot>
      <TaskSlot dot="bg-[#9c7e6f] w-[16px]" className="bg-[#f5f0e9]">
        <svg width="26" height="26" viewBox="0 0 26 26"><rect x="7" y="2" width="18" height="22" rx="1" fill="#21a366" /><rect x="16" y="2" width="9" height="7" fill="#33c481" /><rect x="16" y="9" width="9" height="7" fill="#107c41" /><rect x="7" y="16" width="18" height="8" fill="#185c37" /><rect x="1" y="7" width="13" height="13" rx="1" fill="#107c41" /><path d="M4.500 10l6 7M10.500 10l-6 7" stroke="#fff" strokeWidth="1.500" /></svg>
      </TaskSlot>
      <TaskSlot dot="bg-[#707070]">
        <svg width="26" height="26" viewBox="0 0 26 26"><rect x="7" y="2" width="18" height="22" rx="1" fill="#2b7cd3" /><rect x="7" y="2" width="18" height="6" fill="#41a5ee" /><rect x="7" y="16" width="18" height="8" fill="#103f91" /><rect x="1" y="7" width="13" height="13" rx="1" fill="#185abd" /><path d="M3.500 10l2 7 2-5 2 5 2-7" stroke="#fff" strokeWidth="1.200" fill="none" /></svg>
      </TaskSlot>
    </div>
    <div className="ml-auto flex items-center text-[#333]">
      <div className="relative w-[36px] h-[34px]">
        <svg width="26" height="22" viewBox="0 0 26 22" className="absolute left-[3px] bottom-[4px]"><path d="M6 21a5 5 0 0 1-1-10 7 7 0 0 1 13-2 6 6 0 0 1 2 12z" fill="#a9c9ec" stroke="#e7eff8" /></svg>
        <div className="absolute left-[17px] top-0 w-4 h-4 rounded-full bg-[#c62828] text-white text-[11px] leading-4 text-center font-semibold">2</div>
      </div>
      <div className="text-[11.6px] leading-4 w-[129px]">
        <div>9°C</div>
        <div className="text-[#555]">Cloudy</div>
      </div>
      <ChevronUp size={16} strokeWidth={1.400} className="mr-4" />
      <svg width="18" height="12" viewBox="0 0 18 12" className="mr-[15px]"><path d="M4 12a3.500 3.500 0 0 1-.5-7 5 5 0 0 1 9.500-2 4.500 4.500 0 0 1 1 9z" fill="#0f7fd4" /></svg>
      <svg width="18" height="18" viewBox="0 0 18 18" className="mr-[14px]"><circle cx="8" cy="8" r="7" fill="#7ab8d8" /><path d="M4 3l5 3-2 4 4 4" stroke="#d8eef7" strokeWidth="2" fill="none" /><circle cx="13" cy="13" r="3.500" fill="#444" /></svg>
      <Mic size={17} strokeWidth={1} className="mr-[15px] text-[#7a3b34]" />
      <Wifi size={16} strokeWidth={1.400} className="mr-[8px]" />
      <Volume1 size={16} strokeWidth={1.200} className="mr-[7px]" />
      <svg width="17" height="15" viewBox="0 0 17 15" className="mr-[13px]"><path d="M3 3h10v11H1V5z" fill="#222" /><rect x="13" y="6" width="3" height="4" fill="#222" /><path d="M3 1l2 3" stroke="#222" /></svg>
      <div className="w-[66px] mr-[19px] text-right text-[11.6px] leading-4 text-[#333]">
        <div>09:39</div>
        <div>07/03/2025</div>
      </div>
    </div>
  </div>
)

const App = () => (
  <div className="w-[1600px] h-[900px] overflow-hidden flex flex-col bg-[#e6e6eb] font-['Open_Sans',sans-serif]">
    <TitleBar />
    <TabRow />
    <Ribbon />
    <FormulaBar />
    <div className="mt-[9px] flex h-[534px] shrink-0 bg-[linear-gradient(90deg,#e6e6eb_0%,#e8e7e9_50%,#ece8e6_100%)]">
      <div className="w-[1250px] shrink-0">
        <div className="flex">
          <Grid />
          <VScroll />
        </div>
        <SheetTabs />
      </div>
      <FieldsPanel />
    </div>
    <StatusBar />
    <Taskbar />
  </div>
)

export default App
